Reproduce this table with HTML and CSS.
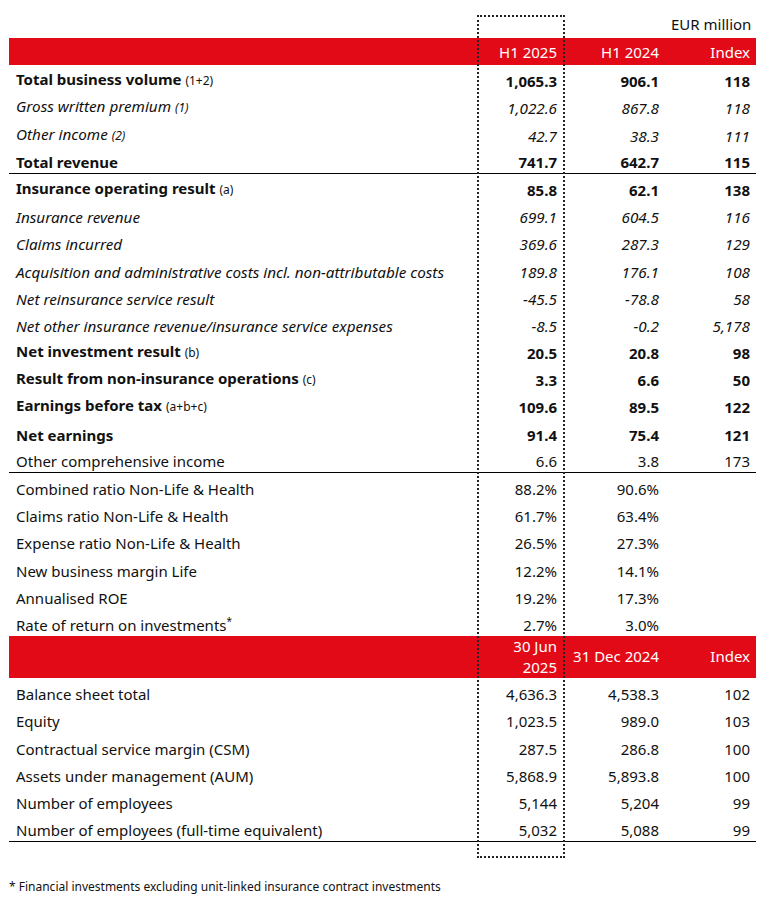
FILE: index.html
```html
<!DOCTYPE html>
<html lang="en">
<head>
<meta charset="utf-8">
<title>Key figures</title>
<link rel="stylesheet" href="styles.css">
</head>
<body>
<div class="page">
  <div class="highlight"></div>
  <table class="kf">
    <colgroup>
      <col class="c-label"><col class="c-a"><col class="c-b"><col class="c-c">
    </colgroup>
    <tr class="unit"><td></td><td></td><td></td><td>EUR million</td></tr>
    <tr class="head"><td></td><td>H1 2025</td><td>H1 2024</td><td>Index</td></tr>
    <tr class="b"><td>Total business volume <span class="note">(1+2)</span></td><td>1,065.3</td><td>906.1</td><td>118</td></tr>
    <tr class="i"><td>Gross written premium <span class="note">(1)</span></td><td>1,022.6</td><td>867.8</td><td>118</td></tr>
    <tr class="i"><td>Other income <span class="note">(2)</span></td><td>42.7</td><td>38.3</td><td>111</td></tr>
    <tr class="b line"><td>Total revenue</td><td>741.7</td><td>642.7</td><td>115</td></tr>
    <tr class="b"><td>Insurance operating result <span class="note">(a)</span></td><td>85.8</td><td>62.1</td><td>138</td></tr>
    <tr class="i"><td>Insurance revenue</td><td>699.1</td><td>604.5</td><td>116</td></tr>
    <tr class="i"><td>Claims incurred</td><td>369.6</td><td>287.3</td><td>129</td></tr>
    <tr class="i"><td>Acquisition and administrative costs incl. non-attributable costs</td><td>189.8</td><td>176.1</td><td>108</td></tr>
    <tr class="i"><td>Net reinsurance service result</td><td>-45.5</td><td>-78.8</td><td>58</td></tr>
    <tr class="i"><td>Net other insurance revenue/insurance service expenses</td><td>-8.5</td><td>-0.2</td><td>5,178</td></tr>
    <tr class="b"><td>Net investment result <span class="note">(b)</span></td><td>20.5</td><td>20.8</td><td>98</td></tr>
    <tr class="b"><td>Result from non-insurance operations <span class="note">(c)</span></td><td>3.3</td><td>6.6</td><td>50</td></tr>
    <tr class="b"><td>Earnings before tax <span class="note">(a+b+c)</span></td><td>109.6</td><td>89.5</td><td>122</td></tr>
    <tr class="b"><td>Net earnings</td><td>91.4</td><td>75.4</td><td>121</td></tr>
    <tr class="line"><td>Other comprehensive income</td><td>6.6</td><td>3.8</td><td>173</td></tr>
    <tr><td>Combined ratio Non-Life &amp; Health</td><td>88.2%</td><td>90.6%</td><td></td></tr>
    <tr><td>Claims ratio Non-Life &amp; Health</td><td>61.7%</td><td>63.4%</td><td></td></tr>
    <tr><td>Expense ratio Non-Life &amp; Health</td><td>26.5%</td><td>27.3%</td><td></td></tr>
    <tr><td>New business margin Life</td><td>12.2%</td><td>14.1%</td><td></td></tr>
    <tr><td>Annualised ROE</td><td>19.2%</td><td>17.3%</td><td></td></tr>
    <tr><td>Rate of return on investments<sup class="ast">*</sup></td><td>2.7%</td><td>3.0%</td><td></td></tr>
    <tr class="head head2"><td></td><td>30 Jun<br>2025</td><td>31 Dec 2024</td><td>Index</td></tr>
    <tr><td>Balance sheet total</td><td>4,636.3</td><td>4,538.3</td><td>102</td></tr>
    <tr><td>Equity</td><td>1,023.5</td><td>989.0</td><td>103</td></tr>
    <tr><td>Contractual service margin (CSM)</td><td>287.5</td><td>286.8</td><td>100</td></tr>
    <tr><td>Assets under management (AUM)</td><td>5,868.9</td><td>5,893.8</td><td>100</td></tr>
    <tr><td>Number of employees</td><td>5,144</td><td>5,204</td><td>99</td></tr>
    <tr class="line"><td>Number of employees (full-time equivalent)</td><td>5,032</td><td>5,088</td><td>99</td></tr>
  </table>
  <p class="foot">* Financial investments excluding unit-linked insurance contract investments</p>
</div>
</body>
</html>
```

FILE: styles.css
```css
html, body {
  margin: 0;
  padding: 0;
  background: #fff;
}
body {
  font-family: "Noto Sans", "Open Sans", sans-serif;
  color: #111;
  font-size: 15px;
}
.page {
  position: relative;
  padding: 12px 0 0 9px;
  width: 747px;
}
.kf {
  border-collapse: collapse;
  width: 747px;
  table-layout: fixed;
}
.c-label { width: 468px; }
.c-a { width: 86px; }
.c-b { width: 102px; }
.c-c { width: 91px; }
.kf td {
  height: 27.2px;
  padding: 0 6px 1px 6px;
  vertical-align: bottom;
  text-align: right;
  white-space: nowrap;
  line-height: 20px;
  box-sizing: border-box;
}
.kf td:first-child {
  text-align: left;
  padding-left: 7px;
}
.kf tr.unit td { height: 26px; padding-bottom: 4px; }
.kf tr.head td {
  background: #e30a17;
  color: #fff;
  height: 27px;
  vertical-align: middle;
  padding-bottom: 0;
}
.kf tr.head2 td {
  height: 41px;
  line-height: 21px;
}
.kf tr.b td { font-weight: 700; }
.kf tr.i td {
  font-style: italic;
  font-size: 15.25px;
}
.kf tr.line td { border-bottom: 1px solid #000; }
.note {
  font-size: 12px;
  font-weight: 400;
}
.ast {
  font-size: 10px;
  line-height: 0;
}
.highlight {
  position: absolute;
  left: 477px;
  top: 15px;
  width: 88px;
  height: 843px;
  border: 2px dotted #222;
  box-sizing: border-box;
  pointer-events: none;
}
.foot {
  margin: 36px 0 0 0;
  font-size: 12px;
}
```
